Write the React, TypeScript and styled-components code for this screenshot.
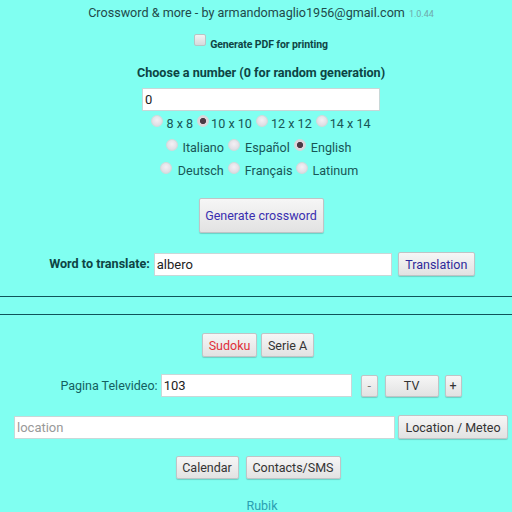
import React from "react";
import styled, { createGlobalStyle } from "styled-components";

const GlobalStyle = createGlobalStyle`
  html, body {
    margin: 0;
    padding: 0;
    background: #80fff1;
  }
  body {
    font-family: Roboto, "Noto Sans", "Liberation Sans", sans-serif;
    color: #134c4c;
  }
`;

const App = () => {
  return (
    <>
      <GlobalStyle />
      <Page>
        <Row $mt={5} $h={16}>
          <Title>Crossword &amp; more - by armandomaglio1956@gmail.com</Title>
          <Version>1.0.44</Version>
        </Row>

        <Row $mt={15} $h={14}>
          <CheckBox type="checkbox" />
          <SmallBold>Generate PDF for printing</SmallBold>
        </Row>

        <Row $mt={15} $h={16}>
          <BoldLabel $size={12.6}>Choose a number (0 for random generation)</BoldLabel>
        </Row>

        <Row $mt={7} $h={22}>
          <TextInput $w={238} defaultValue="0" />
        </Row>

        <Row $mt={3} $h={20} $pl={14}>
          <Radio type="radio" name="size" />
          <RadioLabel $gap={3}>8 x 8</RadioLabel>
          <Radio type="radio" name="size" defaultChecked />
          <RadioLabel $gap={2}>10 x 10</RadioLabel>
          <Radio type="radio" name="size" />
          <RadioLabel $gap={3}>12 x 12</RadioLabel>
          <Radio type="radio" name="size" />
          <RadioLabel $gap={2}>14 x 14</RadioLabel>
        </Row>

        <Row $mt={4} $h={20}>
          <Radio type="radio" name="lang" />
          <RadioLabel $gap={4}>Italiano</RadioLabel>
          <Radio type="radio" name="lang" />
          <RadioLabel $gap={5}>Español</RadioLabel>
          <Radio type="radio" name="lang" defaultChecked />
          <RadioLabel $gap={5}>English</RadioLabel>
        </Row>

        <Row $mt={3} $h={20}>
          <Radio type="radio" name="lang" />
          <RadioLabel $gap={6}>Deutsch</RadioLabel>
          <Radio type="radio" name="lang" />
          <RadioLabel $gap={5}>Français</RadioLabel>
          <Radio type="radio" name="lang" />
          <RadioLabel $gap={4}>Latinum</RadioLabel>
        </Row>

        <Row $mt={18} $h={35}>
          <Button $w={125} $h={35} $color="#3a2fb0">Generate crossword</Button>
        </Row>

        <Row $mt={19} $h={24} $gap={4} $pl={12}>
          <BoldLabel $size={12.6}>Word to translate:</BoldLabel>
          <TextInput $w={238} defaultValue="albero" />
          <Button $w={77} $h={24} $color="#2f2a9a" $ml={2}>Translation</Button>
        </Row>

        <Rule $mt={20} />
        <Rule $mt={17} />

        <Row $mt={18} $h={24} $gap={4} $pl={4}>
          <Button $w={55} $h={24} $color="#e0303a">Sudoku</Button>
          <Button $w={53} $h={24}>Serie A</Button>
        </Row>

        <Row $mt={17} $h={23} $gap={3}>
          <PlainLabel>Pagina Televideo:</PlainLabel>
          <TextInput $w={191} defaultValue="103" />
          <Button $w={17} $h={22} $ml={6} $color="#777">-</Button>
          <Button $w={54} $h={22} $ml={4}>TV</Button>
          <Button $w={17} $h={22} $ml={3}>+</Button>
        </Row>

        <Row $mt={18} $h={24} $gap={3}>
          <TextInput $w={381} placeholder="location" />
          <Button $w={110} $h={24}>Location / Meteo</Button>
        </Row>

        <Row $mt={17} $h={23} $gap={7} $pl={4}>
          <Button $w={63} $h={23}>Calendar</Button>
          <Button $w={95} $h={23}>Contacts/SMS</Button>
        </Row>

        <Row $mt={18} $h={16} $pl={12}>
          <Link href="#">Rubik</Link>
        </Row>
      </Page>
    </>
  );
};

const Page = styled.div`
  display: flex;
  flex-direction: column;
  width: 512px;
  height: 512px;
  overflow: hidden;
`;

const Row = styled.div<{ $mt: number; $h: number; $gap?: number; $pl?: number }>`
  display: flex;
  align-items: center;
  justify-content: center;
  margin-top: ${(p) => p.$mt}px;
  height: ${(p) => p.$h}px;
  padding-left: ${(p) => p.$pl ?? 10}px;
  gap: ${(p) => p.$gap ?? 0}px;
  flex-shrink: 0;
`;

const Title = styled.span`
  font-size: 12.6px;
  line-height: 16px;
  color: #1f4a4a;
`;

const Version = styled.span`
  font-size: 9px;
  color: #6fa9a9;
  margin-left: 4px;
  margin-top: 2px;
`;

const CheckBox = styled.input`
  appearance: none;
  width: 12px;
  height: 12px;
  margin: -7px 4px 0 0;
  border: 1px solid #b9c4c4;
  border-radius: 2px;
  background: linear-gradient(#f2f2f2, #d6d9dc);
`;

const SmallBold = styled.span`
  font-size: 10.5px;
  font-weight: bold;
  color: #0f4545;
  letter-spacing: -0.1px;
  margin-top: 3px;
`;

const BoldLabel = styled.span<{ $size: number }>`
  font-size: ${(p) => p.$size}px;
  font-weight: bold;
  color: #0d4444;
  line-height: 16px;
`;

const PlainLabel = styled.span`
  font-size: 12.5px;
  color: #136060;
`;

const TextInput = styled.input<{ $w: number }>`
  box-sizing: border-box;
  width: ${(p) => p.$w}px;
  height: 23px;
  margin: 0;
  padding: 0 2px;
  border: 1px solid #c8d8d8;
  background: #fff;
  font-family: Roboto, "Noto Sans", sans-serif;
  font-size: 13px;
  color: #222;
  outline: none;
  &::placeholder {
    color: #999;
  }
`;

const Radio = styled.input`
  appearance: none;
  box-sizing: border-box;
  width: 12px;
  height: 12px;
  margin: -4px 0 0 0;
  border-radius: 50%;
  border: 1px solid #d4dada;
  background: radial-gradient(circle at 50% 40%, #f4f0f4, #d6d6de);
  &:checked {
    background: radial-gradient(circle, #4a3a44 0 2.8px, #ddd6dc 3.3px);
  }
`;

const RadioLabel = styled.span<{ $gap: number }>`
  font-size: 12.6px;
  color: #185656;
  margin: 0 4px 0 ${(p) => p.$gap}px;
`;

const Button = styled.button<{ $w: number; $h: number; $color?: string; $ml?: number }>`
  box-sizing: border-box;
  width: ${(p) => p.$w}px;
  height: ${(p) => p.$h}px;
  margin: 0 0 0 ${(p) => p.$ml ?? 0}px;
  padding: 0;
  border: 1px solid #c0c4c6;
  border-radius: 2px;
  background: linear-gradient(#f6f6f6, #e2e2e2);
  box-shadow: 0 1px 1px rgba(0, 0, 0, 0.18);
  font-family: Roboto, "Noto Sans", sans-serif;
  font-size: 12.5px;
  color: ${(p) => p.$color ?? "#333"};
  white-space: nowrap;
`;

const Rule = styled.div<{ $mt: number }>`
  margin-top: ${(p) => p.$mt}px;
  height: 0;
  border-top: 1px solid #10535a;
  flex-shrink: 0;
`;

const Link = styled.a`
  font-size: 12.5px;
  color: #2aa0b2;
  text-decoration: none;
`;

export default App;
